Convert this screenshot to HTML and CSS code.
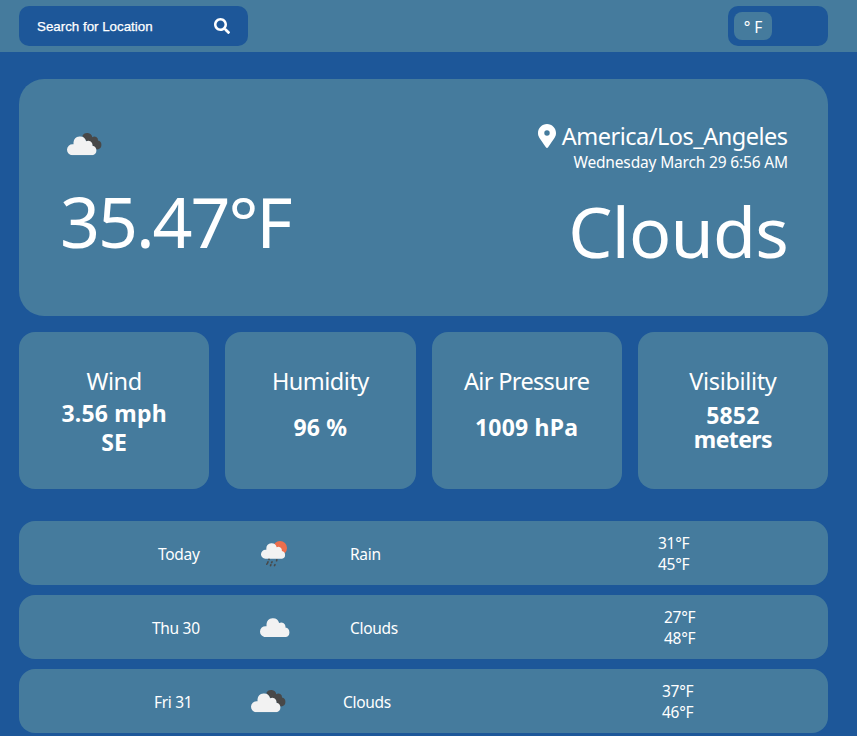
FILE: index.html
```html
<!DOCTYPE html>
<html lang="en">
<head>
<meta charset="utf-8">
<title>Weather</title>
<link rel="stylesheet" href="styles.css">
</head>
<body>
<svg class="defs" aria-hidden="true">
  <symbol id="cloud" viewBox="0 0 30 19">
    <path d="M5.200 19A5.300 5.300 0 0 1 5.600 8.200H6.400V6.200A6.300 6.300 0 0 1 18.800 5.200A4.200 4.200 0 0 1 25 9.600A4.800 4.800 0 0 1 25.200 19Z"/>
  </symbol>
  <symbol id="broken" viewBox="0 0 50 50">
    <path fill="#484848" d="M23.300 17A5.300 5.300 0 0 1 33.300 18.200A3.600 3.600 0 0 1 39 21.600A4.500 4.500 0 0 1 38.700 30.400C36 30.300 36 28.500 34 27.500L32.500 24L28 22.500Z"/>
    <use href="#cloud" x="8" y="17" width="30.500" height="19.300" fill="#f2f2f2"/>
  </symbol>
</svg>
<header class="topbar">
  <div class="search">
    <span>Search for Location</span>
    <svg class="glass" viewBox="0 0 512 512"><path fill="#fff" d="M505 442.700L405.300 343c-4.500-4.500-10.600-7-17-7H372c27.600-35.300 44-79.700 44-128C416 93.100 322.900 0 208 0S0 93.100 0 208s93.100 208 208 208c48.300 0 92.700-16.400 128-44v16.300c0 6.400 2.500 12.500 7 17l99.700 99.700c9.400 9.400 24.600 9.400 33.900 0l28.300-28.300c9.400-9.400 9.400-24.600.1-34zM208 336c-70.700 0-128-57.200-128-128 0-70.700 57.200-128 128-128 70.700 0 128 57.200 128 128 0 70.700-57.200 128-128 128z"/></svg>
  </div>
  <div class="toggle"><span class="unit">° F</span></div>
</header>
<main>
  <section class="hero">
    <div class="now">
      <svg class="wx"><use href="#broken"/></svg>
      <div class="temp">35.47°F</div>
    </div>
    <div class="place">
      <div class="zone"><svg class="pin" viewBox="0 0 384 512"><path fill="#fff" d="M172.300 501.700C27 291 0 269.400 0 192 0 86 86 0 192 0s192 86 192 192c0 77.400-27 99-172.300 309.700-9.500 13.800-29.900 13.800-39.400 0zM192 250a58 58 0 1 0 0-116 58 58 0 0 0 0 116z"/></svg><span>America/Los_Angeles</span></div>
      <div class="date">Wednesday March 29 6:56 AM</div>
      <div class="sky">Clouds</div>
    </div>
  </section>
  <section class="stats">
    <div class="stat wind"><h2>Wind</h2><b>3.56 mph<br>SE</b></div>
    <div class="stat hum"><h2>Humidity</h2><b>96 %</b></div>
    <div class="stat air"><h2>Air Pressure</h2><b>1009 hPa</b></div>
    <div class="stat vis"><h2>Visibility</h2><b>5852<br><span>meters</span></b></div>
  </section>
  <section class="days">
    <div class="day d1"><span>Today</span>
      <svg class="wx" viewBox="0 0 50 50">
        <circle cx="30" cy="20" r="7" fill="#ec6e4c"/>
        <use href="#cloud" x="11" y="14.700" width="25" height="16.300" fill="#f2f2f2"/>
        <path stroke="#484848" stroke-width="1.600" stroke-linecap="round" d="M19 31.300v.3M22 33.800l-.4.800M18 33.800l-.4 1.200M26.800 31.800l-.2 1M17 35.800l-.2.400M20.900 36.700l-.4.900M25 36.600l-.5 1"/>
      </svg>
      <span>Rain</span><span class="range">31°F<br>45°F</span></div>
    <div class="day d2"><span>Thu 30</span>
      <svg class="wx" viewBox="0 0 50 50"><use href="#cloud" x="10" y="15.800" width="30.500" height="19.300" fill="#f2f2f2"/></svg>
      <span>Clouds</span><span class="range">27°F<br>48°F</span></div>
    <div class="day d3"><span>Fri 31</span>
      <svg class="wx"><use href="#broken"/></svg>
      <span>Clouds</span><span class="range">37°F<br>46°F</span></div>
  </section>
</main>
</body>
</html>
```
FILE: styles.css
```css
* { box-sizing: border-box; }
body {
  margin: 0;
  height: 736px;
  overflow: hidden;
  background: #1d5799;
  color: #fff;
  font: 15.5px/21px "Noto Sans", "Open Sans", sans-serif;
}
.defs { display: none; }
svg { display: block; flex: none; }
.topbar {
  display: flex;
  justify-content: space-between;
  height: 52px;
  padding: 6px 29px 6px 19px;
  background: #457b9d;
}
.search {
  display: flex;
  align-items: center;
  justify-content: space-between;
  width: 229px;
  height: 40px;
  padding: 0 18px;
  border-radius: 10px;
  background: #1d5799;
  font: 13.33px/16px "Liberation Sans", sans-serif;
  -webkit-text-stroke: .25px #fff;
}
.search span { padding-top: 2px; }
.glass { width: 16px; height: 16px; }
.toggle {
  width: 100px;
  height: 40px;
  padding: 6px;
  border-radius: 10px;
  background: #1d5799;
}
.unit {
  display: block;
  width: 38px;
  height: 28px;
  border-radius: 8px;
  background: #457b9d;
  line-height: 30px;
  text-align: center;
}
main { padding: 27px 29px 0 19px; }
.hero {
  display: flex;
  justify-content: space-between;
  height: 237px;
  padding: 40px 40px 0;
  border-radius: 25px;
  background: #457b9d;
}
.wx { width: 50px; height: 50px; }
.temp {
  margin: 4px 0 0 1px;
  font-size: 70px;
  line-height: 96px;
  letter-spacing: -2.1px;
}
.place { text-align: right; white-space: nowrap; }
.zone {
  display: flex;
  justify-content: flex-end;
  align-items: center;
  gap: 6px;
  height: 32px;
  margin-top: 1px;
  font-size: 23.5px;
  letter-spacing: -.5px;
}
.zone span { margin-right: .5px; }
.pin { width: 18px; height: 24px; margin-bottom: 1px; }
.date { height: 21px; margin-top: 1px; line-height: 19px; letter-spacing: -.16px; }
.sky { margin-top: 9px; font-size: 70px; line-height: 96px; letter-spacing: -.8px; }
.stats {
  display: grid;
  grid-template-columns: repeat(4, 1fr);
  gap: 16px;
  margin-top: 16px;
}
.stat {
  height: 157px;
  padding-top: 33px;
  border-radius: 16px;
  background: #457b9d;
  text-align: center;
}
h2 { margin: 0; font-size: 23.5px; line-height: 32px; font-weight: 400; letter-spacing: -.5px; }
.wind h2, .vis h2 { letter-spacing: -.35px; }
.air h2 { letter-spacing: -.65px; }
.stat b { display: block; margin-top: 2px; font-size: 23px; line-height: 29px; letter-spacing: .2px; }
.hum b, .air b { margin-top: 16px; }
.vis b { margin-top: 6px; line-height: 24px; }
.vis b span { letter-spacing: -.6px; }
.days { display: grid; gap: 10px; margin-top: 32px; }
.day {
  display: grid;
  align-items: center;
  height: 64px;
  padding-top: 2px;
  border-radius: 16px;
  background: #457b9d;
  letter-spacing: -.3px;
}
.day .wx { margin-top: -2px; }
.d1 { padding-left: 139px; grid-template-columns: 92px 100px 308px 1fr; }
.d2 { padding-left: 133px; grid-template-columns: 98px 100px 314px 1fr; }
.d3 { padding-left: 135px; grid-template-columns: 89px 100px 319px 1fr; }
.day .range { margin-top: -1px; }
```
